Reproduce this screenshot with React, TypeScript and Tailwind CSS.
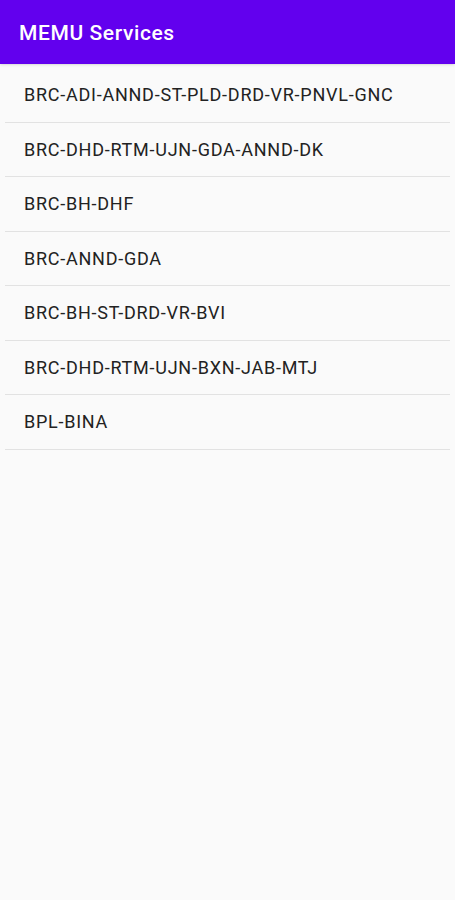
const services = [
  "BRC-ADI-ANND-ST-PLD-DRD-VR-PNVL-GNC",
  "BRC-DHD-RTM-UJN-GDA-ANND-DK",
  "BRC-BH-DHF",
  "BRC-ANND-GDA",
  "BRC-BH-ST-DRD-VR-BVI",
  "BRC-DHD-RTM-UJN-BXN-JAB-MTJ",
  "BPL-BINA",
];

export default function App() {
  return (
    <div
      className="min-h-[900px] bg-[#fafafa]"
      style={{ fontFamily: "Roboto, 'Liberation Sans', sans-serif" }}
    >
      <div className="h-[64px] bg-[#6200ee] flex items-center px-[19px] pt-[3px] shadow">
        <span className="text-white text-[21px] font-medium tracking-[0.6px]">MEMU Services</span>
      </div>
      <ul className="pt-[4px] px-[5px]">
        {services.map((s) => (
          <li
            key={s}
            className="h-[54.5px] flex items-center pl-[19px] border-b border-[#e2e2e2] text-[18px] tracking-[0.75px] text-[#222222]"
          >
            {s}
          </li>
        ))}
      </ul>
    </div>
  );
}
